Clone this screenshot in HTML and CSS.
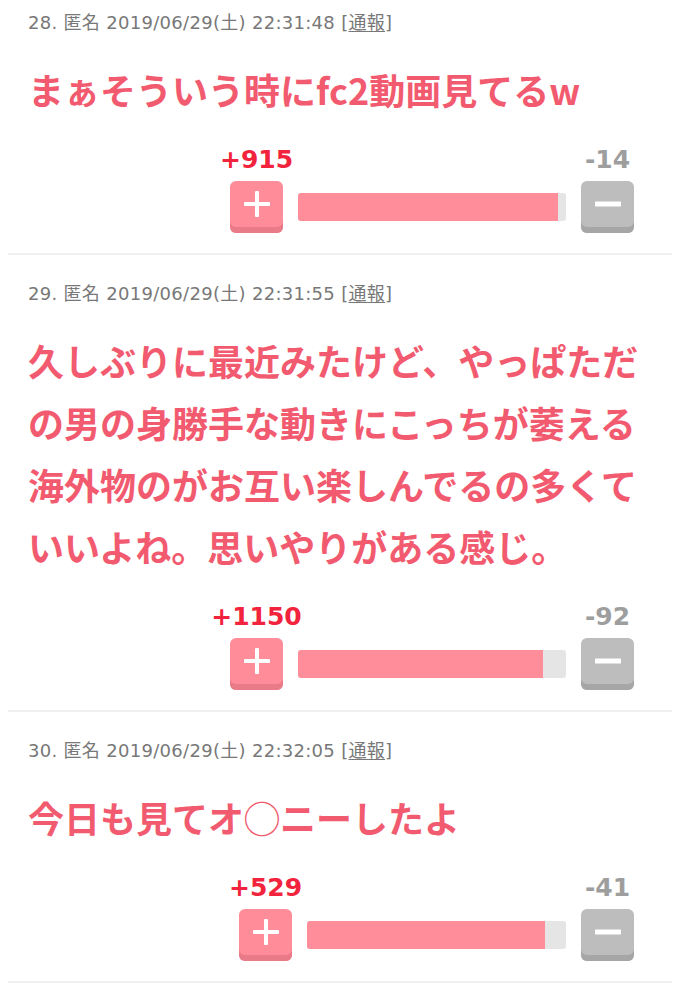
FILE: index.html
```html
<!DOCTYPE html>
<html lang="ja">
<head>
<meta charset="utf-8">
<title>comments</title>
<link rel="stylesheet" href="styles.css">
</head>
<body>
<div class="thread">
  <article class="comment">
    <div class="meta">28. 匿名 2019/06/29(土) 22:31:48 [<span class="report">通報</span>]</div>
    <div class="body">まぁそういう時にfc2動画見てるw</div>
    <div class="vote">
      <div class="vote-col">
        <span class="count count-plus">+915</span>
        <span class="btn btn-plus"><svg width="26" height="26" viewBox="0 0 26 26"><path d="M13 1.5V24.5M1.5 13H24.5" stroke="#fff" stroke-width="4" stroke-linecap="round"/></svg></span>
      </div>
      <div class="bar"><div class="fill" style="width:97%"></div></div>
      <div class="vote-col">
        <span class="count count-minus">-14</span>
        <span class="btn btn-minus"><svg width="26" height="26" viewBox="0 0 26 26"><path d="M1.5 13H24.5" stroke="#fff" stroke-width="5" stroke-linecap="round"/></svg></span>
      </div>
    </div>
  </article>

  <article class="comment">
    <div class="meta">29. 匿名 2019/06/29(土) 22:31:55 [<span class="report">通報</span>]</div>
    <div class="body">久しぶりに最近みたけど、やっぱただの男の身勝手な動きにこっちが萎える海外物のがお互い楽しんでるの多くていいよね。思いやりがある感じ。</div>
    <div class="vote">
      <div class="vote-col">
        <span class="count count-plus">+1150</span>
        <span class="btn btn-plus"><svg width="26" height="26" viewBox="0 0 26 26"><path d="M13 1.5V24.5M1.5 13H24.5" stroke="#fff" stroke-width="4" stroke-linecap="round"/></svg></span>
      </div>
      <div class="bar"><div class="fill" style="width:91.5%"></div></div>
      <div class="vote-col">
        <span class="count count-minus">-92</span>
        <span class="btn btn-minus"><svg width="26" height="26" viewBox="0 0 26 26"><path d="M1.5 13H24.5" stroke="#fff" stroke-width="5" stroke-linecap="round"/></svg></span>
      </div>
    </div>
  </article>

  <article class="comment">
    <div class="meta">30. 匿名 2019/06/29(土) 22:32:05 [<span class="report">通報</span>]</div>
    <div class="body">今日も見てオ◯ニーしたよ</div>
    <div class="vote">
      <div class="vote-col">
        <span class="count count-plus">+529</span>
        <span class="btn btn-plus"><svg width="26" height="26" viewBox="0 0 26 26"><path d="M13 1.5V24.5M1.5 13H24.5" stroke="#fff" stroke-width="4" stroke-linecap="round"/></svg></span>
      </div>
      <div class="bar bar-short"><div class="fill" style="width:92%"></div></div>
      <div class="vote-col">
        <span class="count count-minus">-41</span>
        <span class="btn btn-minus"><svg width="26" height="26" viewBox="0 0 26 26"><path d="M1.5 13H24.5" stroke="#fff" stroke-width="5" stroke-linecap="round"/></svg></span>
      </div>
    </div>
  </article>
</div>
</body>
</html>
```

FILE: styles.css
```css
html, body {
  margin: 0;
  padding: 0;
  background: #fff;
}

body {
  font-family: "DejaVu Sans", "Noto Sans CJK JP", sans-serif;
  overflow: hidden;
}

.thread {
  margin-top: -16px;
}

.comment {
  margin: 0 8px;
  padding: 29px 20px 20px;
  border-bottom: 2px solid #efefef;
}

.meta {
  font-size: 18px;
  line-height: 20px;
  color: #787878;
  letter-spacing: 0.3px;
  white-space: nowrap;
}

.report {
  text-decoration: underline;
  text-underline-offset: 2px;
}

.body {
  margin-top: 25px;
  font-family: "Noto Sans CJK JP", sans-serif;
  font-weight: 700;
  font-size: 36px;
  line-height: 62px;
  color: #f25b6f;
  word-break: break-all;
}

.vote {
  margin-top: 28px;
  display: flex;
  justify-content: flex-end;
  align-items: flex-end;
  gap: 15px;
  padding-right: 18px;
}

.vote-col {
  display: flex;
  flex-direction: column;
  align-items: center;
  gap: 9px;
  width: 53px;
}

.count {
  font-family: "DejaVu Sans", sans-serif;
  font-weight: 700;
  font-size: 25px;
  line-height: 24px;
  white-space: nowrap;
}

.count-plus {
  color: #f2233c;
}

.count-minus {
  color: #9e9e9e;
}

.btn {
  box-sizing: border-box;
  width: 53px;
  height: 52px;
  border-radius: 6px;
  padding-bottom: 6px;
  display: flex;
  align-items: center;
  justify-content: center;
}

.btn-plus {
  background: #ff8d99;
  box-shadow: inset 0 -6px 0 #e97b88;
}

.btn-minus {
  background: #bdbdbd;
  box-shadow: inset 0 -6px 0 #a6a6a6;
}

.bar {
  width: 268px;
  height: 28px;
  margin-bottom: 12px;
  border-radius: 3px;
  background: #e5e5e5;
  overflow: hidden;
}

.bar-short {
  width: 259px;
}

.fill {
  height: 100%;
  background: #ff8e9a;
}
```
